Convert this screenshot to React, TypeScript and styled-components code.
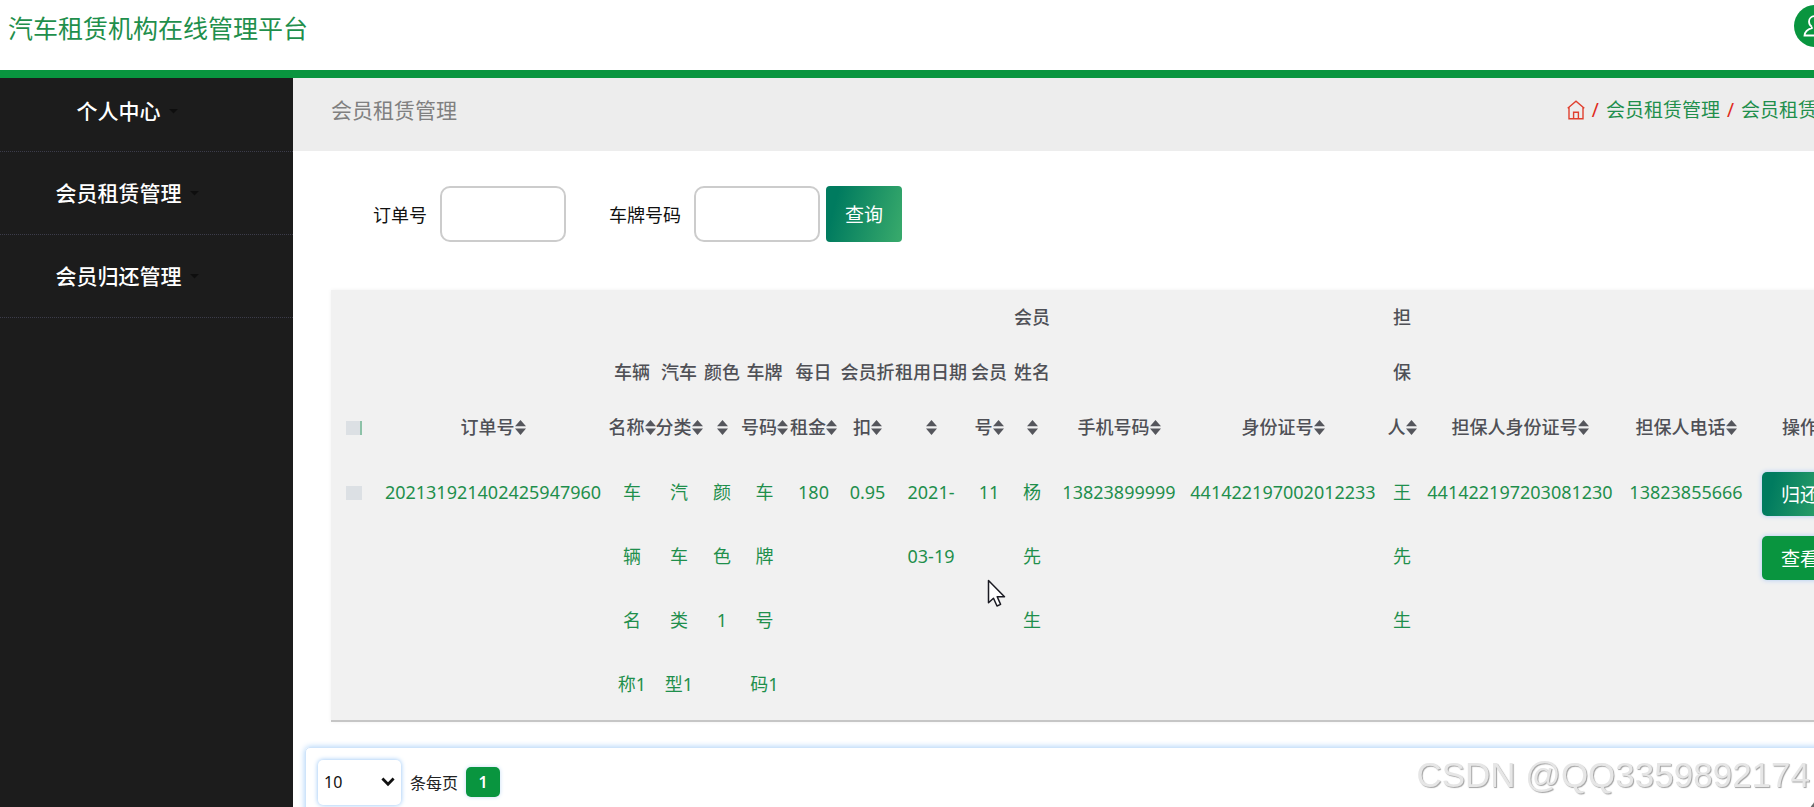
import React from "react";
import styled, { createGlobalStyle } from "styled-components";

const GREEN = "#09953f";
const TEXT_GREEN = "#1f8f4c";

const GlobalStyle = createGlobalStyle`
  *, *::before, *::after { box-sizing: border-box; }
  html, body { margin: 0; height: 100%; overflow: hidden; background: #fff; }
  body, button, input, select {
    font-family: "Noto Sans", "Noto Sans CJK SC", sans-serif;
  }
  #root { height: 100%; }
`;

const Page = styled.div`
  display: flex;
  flex-direction: column;
  min-width: 1893px;
  height: 100%;
`;

const TopBar = styled.header`
  display: flex;
  flex: none;
  align-items: flex-start;
  justify-content: space-between;
  height: 78px;
  padding: 5px 57px 0 8px;
  border-bottom: 8px solid ${GREEN};
`;

const SiteTitle = styled.h1`
  margin: 0;
  padding-top: 3px;
  color: ${TEXT_GREEN};
  font-size: 25px;
  font-weight: 400;
  line-height: 40px;
`;

const Avatar = styled.button`
  display: flex;
  align-items: center;
  justify-content: center;
  width: 42px;
  height: 42px;
  padding: 0;
  border: 0;
  border-radius: 50%;
  background: ${GREEN};
`;

const Body = styled.div`
  display: flex;
  flex: 1;
  min-height: 0;
`;

const Sidebar = styled.nav`
  flex: none;
  width: 293px;
  background: #1c1c1c;
`;

const MenuItem = styled.a`
  display: flex;
  align-items: center;
  justify-content: center;
  gap: 8px;
  height: 83px;
  padding-right: 38px;
  border-bottom: 1px dotted #3c3c4a;
  color: #fff;
  font-size: 21px;
  font-weight: 500;
  line-height: 32px;
  text-decoration: none;

  &:first-child {
    height: 74px;
    padding-bottom: 7px;
  }
`;

const MenuCaret = styled.span`
  width: 10px;
  height: 5px;
  background: #0e0e0e;
  clip-path: polygon(0 0, 100% 0, 50% 100%);
`;

const Main = styled.main`
  flex: 1;
  min-width: 0;
`;

const PageHead = styled.div`
  display: flex;
  align-items: center;
  justify-content: space-between;
  height: 73px;
  padding: 0 38px 10px;
  background: #ededed;
`;

const PageTitle = styled.h2`
  margin: 0;
  color: #808080;
  font-size: 21px;
  font-weight: 400;
  line-height: 32px;
`;

const Breadcrumb = styled.nav`
  display: flex;
  align-items: center;
  gap: 7px;
  color: #e02a20;
  font-size: 19px;
  line-height: 32px;
`;

const Crumb = styled.a`
  display: flex;
  color: ${TEXT_GREEN};
  text-decoration: none;
`;

const SearchForm = styled.form`
  display: flex;
  align-items: center;
  padding: 35px 0 48px 80px;
  font-size: 18px;
`;

const Field = styled.label`
  display: flex;
  align-items: center;
  gap: 13px;
  margin-right: 43px;
  color: #111;

  &:last-of-type { margin-right: 6px; }
`;

const FieldInput = styled.input`
  width: 126px;
  height: 56px;
  padding: 0 12px;
  border: 2px solid #ccc;
  border-radius: 10px;
  background: #fff;
  font-size: 18px;
`;

const SearchButton = styled.button`
  width: 76px;
  height: 56px;
  padding: 0;
  border: 0;
  border-radius: 4px;
  background: linear-gradient(105deg, #007b5f 15%, #36a86b 95%);
  color: #fff;
  font-size: 19px;
`;

const TableBox = styled.div`
  margin: 0 38px 25px;
  border-bottom: 2px solid #c6c6c6;
  background: #f1f1f1;
  box-shadow: 0 0 4px #f1f1f1;
`;

const DataTable = styled.table`
  width: 1513px;
  table-layout: fixed;
  border-collapse: collapse;
  text-align: center;
  white-space: nowrap;
  font-size: 18px;
`;

const HeadCell = styled.th`
  padding: 0;
  color: #4f5056;
  font-weight: 500;
  line-height: 55px;
  vertical-align: bottom;
`;

/* Lets a heading wider than its column stay centred on it. */
const HeadText = styled.div`
  display: flex;
  flex-direction: column;
  align-items: center;
`;

const Line = styled.span`
  display: flex;
  align-items: center;
  height: 55px;
`;

const Cell = styled.td`
  padding: 5px 0 4px;
  color: ${TEXT_GREEN};
  line-height: 64px;
  vertical-align: top;
`;

const Tick = styled.input<{ $edge?: boolean }>`
  display: block;
  width: 16px;
  height: 14px;
  margin: ${(p) => (p.$edge ? "21px auto 20px" : "26px auto 0")};
  border: 0 solid #8dc2a8;
  border-right-width: ${(p) => (p.$edge ? "2px" : "0")};
  appearance: none;
  background: #dce0e4;
`;

const RowActions = styled.div`
  display: flex;
  flex-direction: column;
  align-items: flex-start;
  gap: 20px;
  padding: 12px 0 0 6px;
`;

const ActionButton = styled.button<{ $gradient?: boolean }>`
  width: 76px;
  height: 44px;
  padding: 0;
  border: 0;
  border-radius: 5px;
  background: ${(p) => (p.$gradient ? "linear-gradient(105deg, #007b5f 15%, #36a86b 95%)" : GREEN)};
  box-shadow: 0 0 5px #a9c8f5;
  color: #fff;
  font-size: 19px;
`;

const Pager = styled.div`
  display: flex;
  align-items: center;
  height: 70px;
  margin: 0 12px;
  padding: 0 12px;
  border: 1px solid #cfe4fa;
  border-radius: 5px;
  box-shadow: 0 0 6px #a6cff8;
  font-size: 16px;
`;

const PageSize = styled.label`
  display: flex;
  align-items: center;
  gap: 9px;
  margin-right: 8px;
  color: #222;
`;

const SelectBox = styled.span`
  display: grid;
  align-items: center;

  > * { grid-area: 1 / 1; }
  > svg {
    justify-self: end;
    margin-right: 6px;
    pointer-events: none;
  }
`;

const SizeSelect = styled.select`
  width: 83px;
  height: 45px;
  padding: 0 6px;
  border: 0;
  border-radius: 5px;
  appearance: none;
  background: #fff;
  box-shadow: 0 0 5px #8fc0f5;
  color: #111;
  font-size: 16px;
`;

const PageButton = styled.button`
  width: 34px;
  height: 30px;
  padding: 0;
  border: 0;
  border-radius: 5px;
  background: ${GREEN};
  box-shadow: 0 0 4px #c4dcf5;
  color: #fff;
  font-size: 16px;
  font-weight: 600;
`;

const Pointer = styled.svg`
  position: fixed;
  left: 987px;
  top: 579px;
`;

const Watermark = styled.div`
  position: fixed;
  right: 4px;
  bottom: 12px;
  color: #e6e6e6;
  font-family: "Liberation Sans", sans-serif;
  font-size: 35px;
  line-height: 40px;
  text-shadow: 1px 1px 1px #a2a2a2;
  white-space: nowrap;
`;

const FloatButton = styled.button`
  position: fixed;
  right: -43px;
  bottom: -38px;
  width: 50px;
  height: 50px;
  border: 0;
  border-radius: 50%;
  background: #6a6a6a;
`;

const SortIcon = () => (
  <svg width="11" height="15" viewBox="0 0 11 15" fill="#55565c" aria-hidden="true">
    <path d="M5.5 0 11 6.3H0z" />
    <path d="M0 8.4h11L5.5 15z" />
  </svg>
);

const HomeIcon = () => (
  <svg width="18" height="20" viewBox="0 0 18 20" fill="none" stroke="#e0402f" strokeWidth="1.4" aria-hidden="true">
    <path d="M.7 8.2 9 1.2l8.3 7M2 7.2v11.6h14V7.2" />
    <path d="M6.6 18.8v-6.6h4.8v6.6" />
  </svg>
);

const ChevronIcon = () => (
  <svg width="14" height="10" viewBox="0 0 14 10" fill="none" stroke="#111" strokeWidth="2.8" aria-hidden="true">
    <path d="M1.4 1.6 7 7.2l5.600-5.600" />
  </svg>
);

const UserIcon = () => (
  <svg width="24" height="24" viewBox="0 0 24 24" fill="none" stroke="#fff" strokeWidth="1.8" aria-hidden="true">
    <path d="M8.8 12.8C7 11.6 6 9.7 6 7.6 6 4.4 8.6 2 12 2s6 2.4 6 5.6c0 2.100-1 4-2.800 5.200" />
    <path d="M8.800 12.800v1.400C4.600 15.400 2 17.500 1.500 21.500h21c-.5-4-3.100-6.100-7.300-7.300v-1.400" />
  </svg>
);

const menu = ["个人中心", "会员租赁管理", "会员归还管理"];

type Column = { width: number; head: string[]; value: string[] };

const columns: Column[] = [
  { width: 232, head: ["订单号"], value: ["202131921402425947960"] },
  { width: 46, head: ["车辆", "名称"], value: ["车", "辆", "名", "称1"] },
  { width: 48, head: ["汽车", "分类"], value: ["汽", "车", "类", "型1"] },
  { width: 38, head: ["颜色", ""], value: ["颜", "色", "1"] },
  { width: 47, head: ["车牌", "号码"], value: ["车", "牌", "号", "码1"] },
  { width: 51, head: ["每日", "租金"], value: ["180"] },
  { width: 57, head: ["会员折", "扣"], value: ["0.95"] },
  { width: 70, head: ["租用日期", ""], value: ["2021-", "03-19"] },
  { width: 46, head: ["会员", "号"], value: ["11"] },
  { width: 40, head: ["会员", "姓名", ""], value: ["杨", "先", "生"] },
  { width: 134, head: ["手机号码"], value: ["13823899999"] },
  { width: 194, head: ["身份证号"], value: ["441422197002012233"] },
  { width: 44, head: ["担", "保", "人"], value: ["王", "先", "生"] },
  { width: 192, head: ["担保人身份证号"], value: ["441422197203081230"] },
  { width: 140, head: ["担保人电话"], value: ["13823855666"] },
];

export default function App() {
  return (
    <Page>
      <GlobalStyle />
      <TopBar>
        <SiteTitle>汽车租赁机构在线管理平台</SiteTitle>
        <Avatar type="button" aria-label="个人中心">
          <UserIcon />
        </Avatar>
      </TopBar>
      <Body>
        <Sidebar>
          {menu.map((label) => (
            <MenuItem href="#" key={label}>
              {label}
              <MenuCaret />
            </MenuItem>
          ))}
        </Sidebar>
        <Main>
          <PageHead>
            <PageTitle>会员租赁管理</PageTitle>
            <Breadcrumb>
              <Crumb href="#" aria-label="首页">
                <HomeIcon />
              </Crumb>
              <span>/</span>
              <Crumb href="#">会员租赁管理</Crumb>
              <span>/</span>
              <Crumb href="#">会员租赁列表</Crumb>
            </Breadcrumb>
          </PageHead>
          <SearchForm onSubmit={(e) => e.preventDefault()}>
            <Field>
              订单号
              <FieldInput type="text" name="order" />
            </Field>
            <Field>
              车牌号码
              <FieldInput type="text" name="plate" />
            </Field>
            <SearchButton type="submit">查询</SearchButton>
          </SearchForm>
          <TableBox>
            <DataTable>
              <colgroup>
                <col width={46} />
                {columns.map((c, i) => (
                  <col key={i} width={c.width} />
                ))}
                <col width={88} />
              </colgroup>
              <thead>
                <tr>
                  <HeadCell>
                    <Tick $edge type="checkbox" aria-label="全选" />
                  </HeadCell>
                  {columns.map((c, i) => (
                    <HeadCell key={i}>
                      <HeadText>
                        {c.head.map((line, n) => (
                          <Line key={n}>
                            {line}
                            {n === c.head.length - 1 && <SortIcon />}
                          </Line>
                        ))}
                      </HeadText>
                    </HeadCell>
                  ))}
                  <HeadCell>操作</HeadCell>
                </tr>
              </thead>
              <tbody>
                <tr>
                  <Cell>
                    <Tick type="checkbox" aria-label="选择" />
                  </Cell>
                  {columns.map((c, i) => (
                    <Cell key={i}>
                      {c.value.map((line, n) => (
                        <div key={n}>{line}</div>
                      ))}
                    </Cell>
                  ))}
                  <Cell>
                    <RowActions>
                      <ActionButton type="button" $gradient>归还</ActionButton>
                      <ActionButton type="button">查看</ActionButton>
                    </RowActions>
                  </Cell>
                </tr>
              </tbody>
            </DataTable>
          </TableBox>
          <Pager>
            <PageSize>
              <SelectBox>
                <SizeSelect defaultValue="10">
                  <option>10</option>
                  <option>25</option>
                  <option>50</option>
                </SizeSelect>
                <ChevronIcon />
              </SelectBox>
              条每页
            </PageSize>
            <PageButton type="button">1</PageButton>
          </Pager>
        </Main>
      </Body>
      <FloatButton type="button" aria-label="返回顶部" />
      <Watermark>CSDN @QQ3359892174</Watermark>
      <Pointer width="20" height="30" viewBox="0 0 20 30" fill="#fff" stroke="#1a1a22" strokeWidth="1.5" strokeLinejoin="round" aria-hidden="true">
        <path d="M1.500 1.500v22.300l5-4.600 3.500 7.800 3.600-1.600-3.400-7.600h7.300z" />
      </Pointer>
    </Page>
  );
}
